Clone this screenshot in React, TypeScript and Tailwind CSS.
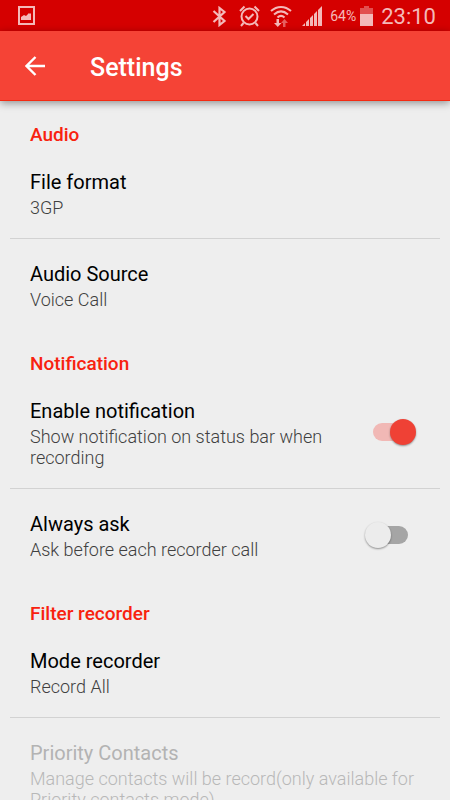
import React, { useState } from 'react';

interface SwitchProps {
  id: string;
  checked: boolean;
  onChange: (checked: boolean) => void;
}

const Switch: React.FC<SwitchProps> = ({ id, checked, onChange }) => (
  <span className={`relative flex h-7 w-[43px] shrink-0 items-center ${checked ? 'mr-4' : 'mr-6'}`}>
    <input
      id={id}
      type="checkbox"
      role="switch"
      checked={checked}
      onChange={(e) => onChange(e.target.checked)}
      className="absolute inset-0 z-10 cursor-pointer opacity-0"
    />
    <span className={`h-[18px] w-9 rounded-full ${checked ? 'bg-[#f1b8b5]' : 'ml-2 bg-[#a5a5a5]'}`} />
    <span
      className={`absolute top-px size-[26px] rounded-full shadow-[0_1px_2px_rgba(0,0,0,0.4)] ${
        checked ? 'right-0 bg-[#ef4135]' : 'left-0 bg-[#ececec]'
      }`}
    />
  </span>
);

interface PreferenceProps {
  title: string;
  summary: string;
  divider?: boolean;
  disabled?: boolean;
}

const rowClass = 'flex w-full items-center justify-between pt-5 pb-5 pl-5 text-left';

const PreferenceText: React.FC<PreferenceProps> = ({ title, summary, disabled }) => (
  <span className="block min-w-0">
    <span className={`block text-[20px] leading-[30px] ${disabled ? 'text-[#b3b3b3]' : 'text-black'}`}>{title}</span>
    <span className={`block text-[18px] leading-[21px] font-light ${disabled ? 'text-[#b8b8b8]' : 'text-[#404040]'}`}>
      {summary}
    </span>
  </span>
);

const Preference: React.FC<PreferenceProps> = (props) => (
  <li className={props.divider ? 'border-b border-[#d2d2d2]' : ''}>
    <button type="button" disabled={props.disabled} className={`${rowClass} pr-5`}>
      <PreferenceText {...props} />
    </button>
  </li>
);

const SwitchPreference: React.FC<PreferenceProps & SwitchProps> = ({ id, checked, onChange, ...text }) => (
  <li className={`${rowClass} pr-2 ${text.divider ? 'border-b border-[#d2d2d2]' : ''}`}>
    <label htmlFor={id} className="max-w-[300px]">
      <PreferenceText {...text} />
    </label>
    <Switch id={id} checked={checked} onChange={onChange} />
  </li>
);

const Category: React.FC<{ title: string; children: React.ReactNode }> = ({ title, children }) => (
  <section>
    <h2 className="px-5 pt-6 pb-0.5 text-[19px] leading-5 font-medium text-[#f8220f]">{title}</h2>
    <ul>{children}</ul>
  </section>
);

const StatusBar: React.FC = () => (
  <div className="flex h-[31px] items-center justify-between bg-[#d50000] pr-3.5 pl-[18px] text-[#f4b9b9]">
    <svg width="17" height="19" viewBox="0 0 17 19" fill="none">
      <path d="M1 1h15v17H1z" stroke="currentColor" strokeWidth="2" />
      <path d="M3 14v-3l3-2 2 1 3-3 1 1 1-1v7z" fill="currentColor" />
    </svg>
    <div className="flex items-center pt-px">
      <svg className="mr-3" width="15" height="21" viewBox="0 0 15 21" fill="none" stroke="currentColor" strokeWidth="2.2">
        <path d="M1.500 5l11 10-5 4V2l5 4-11 10" />
      </svg>
      <svg className="mr-2.5" width="21" height="22" viewBox="0 0 21 22" fill="none" stroke="currentColor" strokeWidth="2">
        <circle cx="10.500" cy="11.500" r="8" />
        <path d="M1 6l4.500-4.500M15.500 1.500L20 6M4.500 18L2 21M16.500 18l2.500 3M6.500 11l3 3 5-5" />
      </svg>
      <svg className="mr-2.5" width="22" height="22" viewBox="0 0 22 22" fill="none" stroke="currentColor" strokeWidth="2">
        <path d="M1 6C7 .5 15 .5 21 6M4 9.500c4.500-4 9.500-4 14 0M7.500 12.500c2.200-2 4.800-2 7 0" />
        <path d="M6.500 14h2.500v4h2.500L7.750 22 4 18h2.500z" fill="currentColor" stroke="none" />
        <path d="M13 22v-4h-2l3.500-4 3.500 4h-2.500v4z" fill="#e65f5f" stroke="none" />
      </svg>
      <svg className="mr-2" width="20" height="22" viewBox="0 0 20 22" fill="currentColor">
        <path d="M0 21l3-3v3zM4 17l3-3v7H4zM8 13l3-3v11H8zM12 9l3-3v15h-3zM16 5l4-4v20h-4z" />
      </svg>
      <span className="mr-1 text-[14px] leading-5">64%</span>
      <svg className="mr-2" width="13" height="20" viewBox="0 0 13 20">
        <path d="M4 0h5v2h4v7H0V2h4z" fill="#e25050" />
        <path d="M0 8h13v12H0z" fill="currentColor" />
      </svg>
      <span className="pt-0.5 text-[22px] leading-7">23:10</span>
    </div>
  </div>
);

const App: React.FC = () => {
  const [notify, setNotify] = useState(true);
  const [alwaysAsk, setAlwaysAsk] = useState(false);

  return (
    <div className="h-screen overflow-hidden bg-[#eeeeee] font-['Roboto',sans-serif]">
      <StatusBar />
      <header className="relative flex h-[70px] items-center border-b border-[#f42a12] bg-[#f54336] pl-[25px] text-white shadow-[0_2px_8px_rgba(0,0,0,0.4)]">
        <button type="button" aria-label="Back" className="mr-[45px]">
          <svg width="20" height="20" viewBox="0 0 20 20" fill="none" stroke="currentColor" strokeWidth="2.4">
            <path d="M20 10H2M10.500 1L1.500 10l9 9" />
          </svg>
        </button>
        <h1 className="pt-1 text-[25px] leading-8 font-medium">Settings</h1>
      </header>
      <main className="px-2.5">
        <Category title="Audio">
          <Preference title="File format" summary="3GP" divider />
          <Preference title="Audio Source" summary="Voice Call" />
        </Category>
        <Category title="Notification">
          <SwitchPreference
            id="enable-notification"
            title="Enable notification"
            summary="Show notification on status bar when recording"
            checked={notify}
            onChange={setNotify}
            divider
          />
          <SwitchPreference
            id="always-ask"
            title="Always ask"
            summary="Ask before each recorder call"
            checked={alwaysAsk}
            onChange={setAlwaysAsk}
          />
        </Category>
        <Category title="Filter recorder">
          <Preference title="Mode recorder" summary="Record All" divider />
          <Preference
            title="Priority Contacts"
            summary="Manage contacts will be record(only available for Priority contacts mode)"
            disabled
          />
        </Category>
      </main>
    </div>
  );
};

export default App;
